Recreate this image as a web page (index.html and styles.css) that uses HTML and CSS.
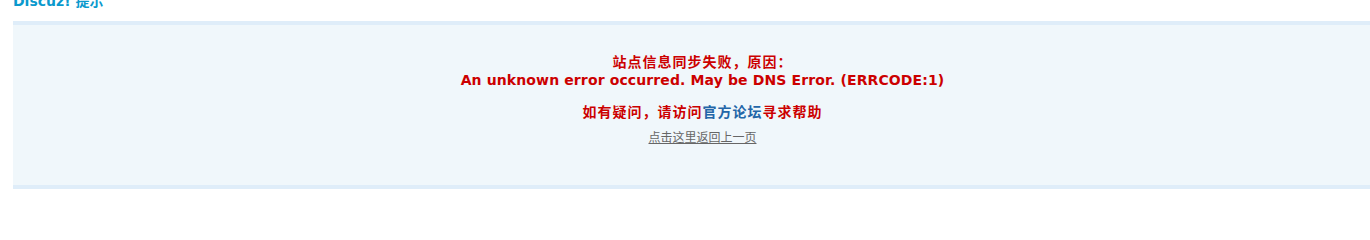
FILE: index.html
```html
<!DOCTYPE html>
<html lang="zh-CN">
<head>
<meta charset="utf-8">
<title>Discuz! 提示</title>
<link rel="stylesheet" href="styles.css">
</head>
<body>
<h3 class="title">Discuz! 提示</h3>
<div class="box">
  <div class="msg">
    <p class="alert">
      <span class="cn">站点信息同步失败，原因：</span>
      <span class="en">An unknown error occurred. May be DNS Error. (ERRCODE:1)</span>
    </p>
    <p class="alert help"><span class="cn">如有疑问，请访问<a class="official" href="#">官方论坛</a>寻求帮助</span></p>
    <p class="back"><a href="#">点击这里返回上一页</a></p>
  </div>
</div>
</body>
</html>
```
FILE: styles.css
```css
html, body {
  margin: 0;
  padding: 0;
  background: #ffffff;
  overflow: hidden;
}
body {
  font-family: "DejaVu Sans", Verdana, "Noto Sans CJK SC", sans-serif;
  font-size: 12px;
  color: #444;
}
.title {
  margin: -7px 0 12px 13px;
  font-size: 14px;
  line-height: 16px;
  font-weight: bold;
  color: #0a99cd;
  font-family: "DejaVu Sans", "Noto Sans CJK SC", sans-serif;
}
.box {
  margin-left: 13px;
  height: 160px;
  border-top: 4px solid #dfedf9;
  border-bottom: 4px solid #dfedf9;
  background: #f0f7fb;
}
.msg {
  display: flex;
  flex-direction: column;
  align-items: center;
  padding: 27px 0 0 22px;
}
.msg p {
  margin: 0;
}
.alert {
  display: flex;
  flex-direction: column;
  align-items: center;
  font-size: 14px;
  line-height: 19px;
  font-weight: bold;
  color: #cc0000;
}
.cn {
  font-family: "Noto Sans CJK SC", sans-serif;
  letter-spacing: 1px;
}
.en {
  font-family: "DejaVu Sans", Verdana, sans-serif;
  letter-spacing: 0.12px;
}
.help {
  margin-top: 12px !important;
}
.official {
  color: #2366a8;
  text-decoration: none;
}
.back {
  margin-top: 6px !important;
  font-size: 12px;
  line-height: 19px;
  font-family: "Noto Sans CJK SC", sans-serif;
}
.back a {
  color: #666;
  text-decoration: underline;
}
```
